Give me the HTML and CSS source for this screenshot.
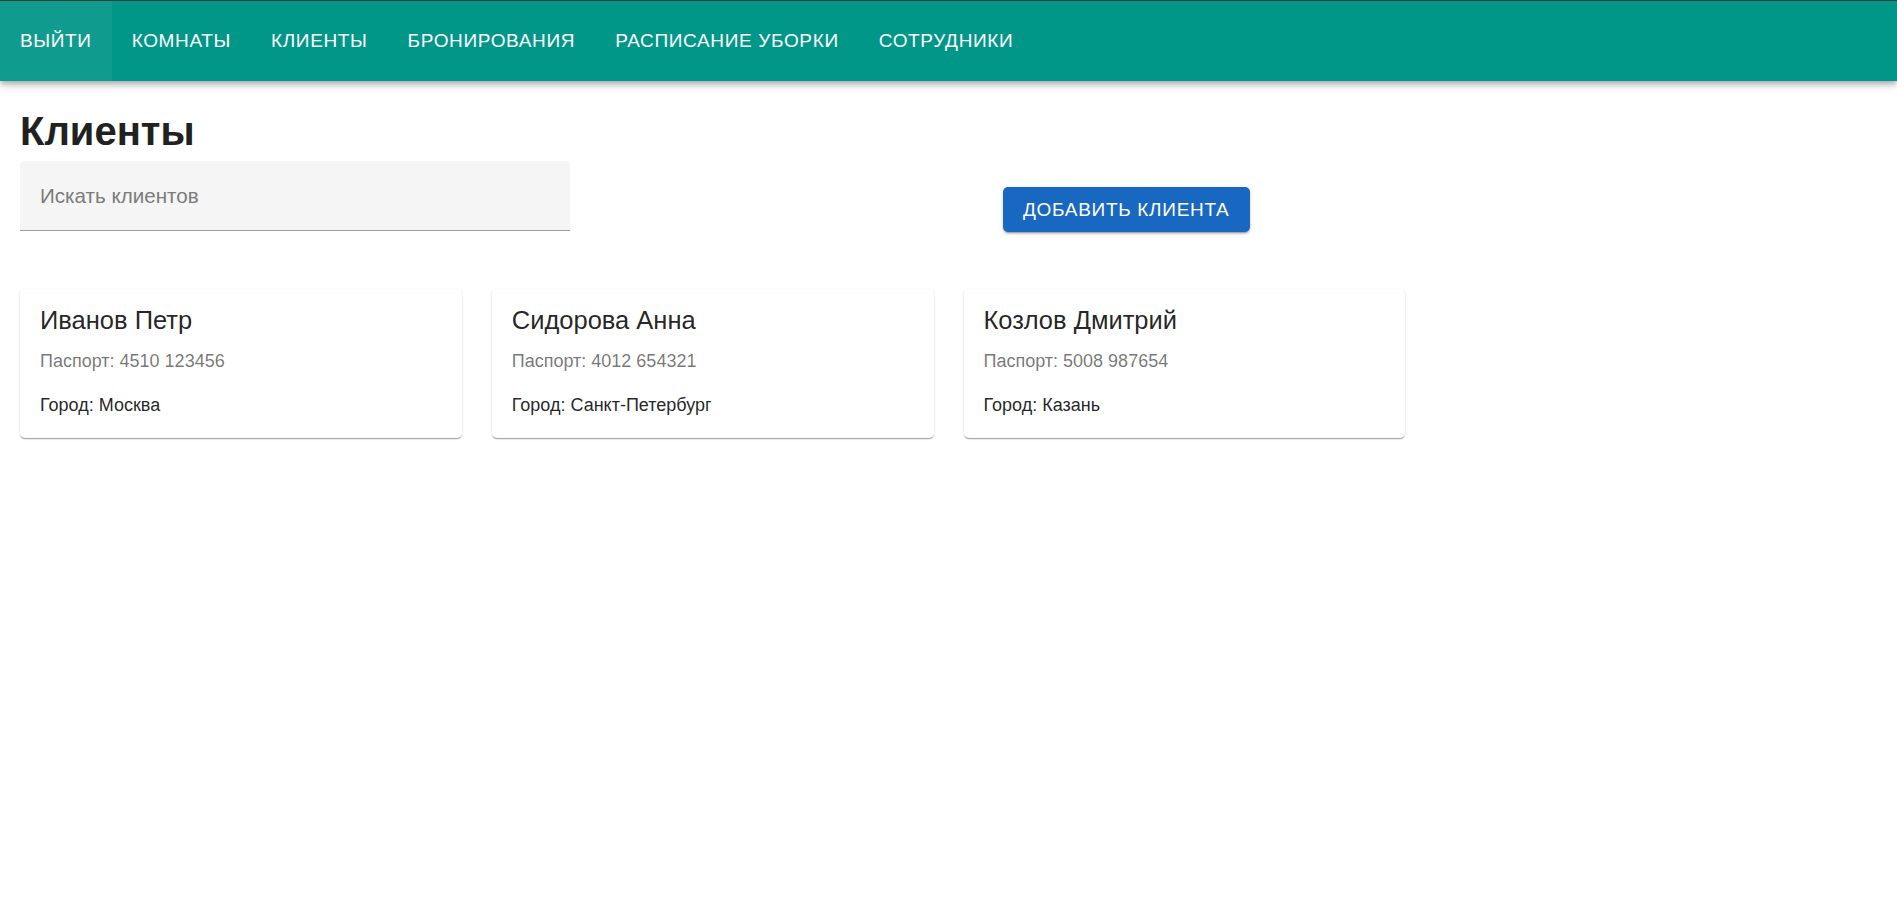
FILE: index.html
```html
<!DOCTYPE html>
<html lang="ru">
<head>
<meta charset="utf-8">
<title>Клиенты</title>
<link rel="stylesheet" href="styles.css">
</head>
<body>
<header class="appbar">
  <nav class="nav">
    <a class="nav-btn nav-btn--active" href="#">Выйти</a>
    <a class="nav-btn" href="#">Комнаты</a>
    <a class="nav-btn" href="#">Клиенты</a>
    <a class="nav-btn" href="#">Бронирования</a>
    <a class="nav-btn" href="#">Расписание уборки</a>
    <a class="nav-btn" href="#">Сотрудники</a>
  </nav>
</header>
<main class="main">
  <h1 class="title">Клиенты</h1>
  <div class="toolbar">
    <div class="search">
      <input class="search-input" type="text" placeholder="Искать клиентов">
    </div>
    <button class="add-btn" type="button">Добавить клиента</button>
  </div>
  <section class="cards">
    <article class="card">
      <h2 class="card-name">Иванов Петр</h2>
      <p class="card-passport">Паспорт: 4510 123456</p>
      <p class="card-city">Город: Москва</p>
    </article>
    <article class="card">
      <h2 class="card-name">Сидорова Анна</h2>
      <p class="card-passport">Паспорт: 4012 654321</p>
      <p class="card-city">Город: Санкт-Петербург</p>
    </article>
    <article class="card">
      <h2 class="card-name">Козлов Дмитрий</h2>
      <p class="card-passport">Паспорт: 5008 987654</p>
      <p class="card-city">Город: Казань</p>
    </article>
  </section>
</main>
</body>
</html>
```
FILE: styles.css
```css
* { box-sizing: border-box; }

html, body {
  margin: 0;
  padding: 0;
  background: #ffffff;
  font-family: "Liberation Sans", Arial, sans-serif;
  color: rgba(0, 0, 0, 0.87);
}

.appbar {
  height: 81px;
  border-top: 1px solid #3b3b3b;
  background: #009688;
  box-shadow: 0 2px 5px -1px rgba(0,0,0,0.2), 0 5px 6px 0 rgba(0,0,0,0.14), 0 1px 12px 0 rgba(0,0,0,0.12);
  position: relative;
  z-index: 1;
}

.nav {
  display: flex;
  height: 100%;
}

.nav-btn {
  display: flex;
  align-items: center;
  padding: 0 20px;
  height: 100%;
  color: #ffffff;
  text-decoration: none;
  text-transform: uppercase;
  font-size: 19px;
  letter-spacing: 0.65px;
  font-weight: 400;
}

.nav-btn--active {
  background: rgba(255, 255, 255, 0.06);
}

.main {
  padding: 28px 20px 20px;
}

.title {
  margin: 0;
  font-size: 40px;
  line-height: 44px;
  font-weight: 700;
  color: #212121;
}

.toolbar {
  display: flex;
  align-items: flex-end;
  margin-top: 8px;
}

.search {
  width: 550px;
  height: 70px;
  background: #f5f5f5;
  border-radius: 5px 5px 0 0;
  border-bottom: 1px solid #9e9e9e;
  display: flex;
  align-items: center;
}

.search-input {
  width: 100%;
  height: 100%;
  border: 0;
  outline: 0;
  background: transparent;
  padding: 0 20px;
  font-family: inherit;
  font-size: 20.6px;
  color: rgba(0, 0, 0, 0.87);
}

.search-input::placeholder {
  color: #7b7b7b;
  opacity: 1;
}

.add-btn {
  margin-left: 433px;
  margin-bottom: -1px;
  height: 45px;
  padding: 0 20px;
  border: 0;
  border-radius: 5px;
  background: #1867c0;
  color: #ffffff;
  font-family: inherit;
  font-size: 19px;
  letter-spacing: 0.7px;
  text-transform: uppercase;
  box-shadow: 0 3px 1px -2px rgba(0,0,0,0.2), 0 2px 2px 0 rgba(0,0,0,0.14), 0 1px 5px 0 rgba(0,0,0,0.12);
  cursor: pointer;
}

.cards {
  display: grid;
  grid-template-columns: repeat(4, 1fr);
  gap: 30px;
  margin-top: 58px;
}

.card {
  background: #ffffff;
  border-radius: 5px;
  padding: 16px 20px 20px;
  box-shadow: 0 2px 1px -1px rgba(0,0,0,0.2), 0 1px 1px 0 rgba(0,0,0,0.14), 0 1px 3px 0 rgba(0,0,0,0.12);
}

.card-name {
  margin: 0 0 14px;
  font-size: 25.5px;
  line-height: 30px;
  font-weight: 400;
  color: rgba(0, 0, 0, 0.87);
}

.card-passport {
  margin: 0 0 19px;
  font-size: 18px;
  line-height: 25px;
  color: rgba(0, 0, 0, 0.55);
}

.card-city {
  margin: 0;
  font-size: 18px;
  line-height: 25px;
  color: rgba(0, 0, 0, 0.87);
}
```
